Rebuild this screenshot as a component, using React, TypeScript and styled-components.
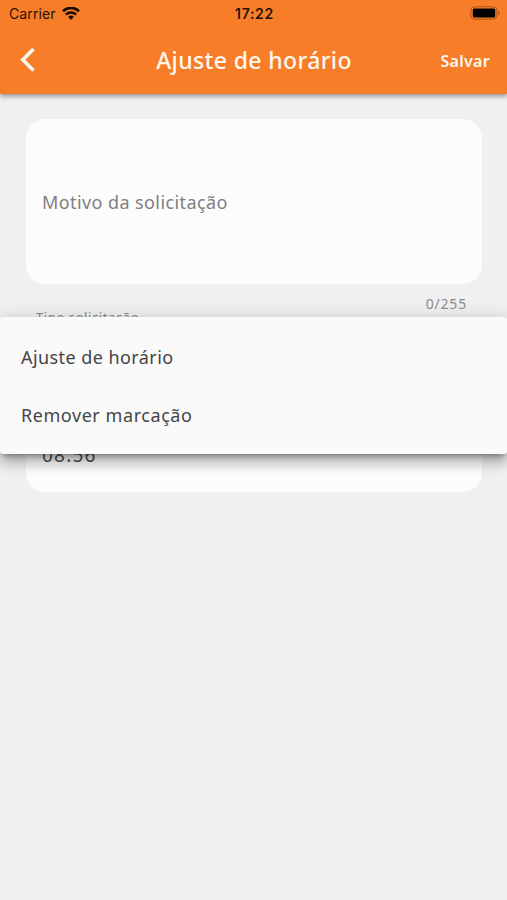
import React from 'react';
import styled, { createGlobalStyle } from 'styled-components';

const GlobalStyle = createGlobalStyle`
  * { box-sizing: border-box; }
  body { margin: 0; background: #f0f0f0; }
`;

const Screen = styled.div`
  position: relative;
  height: 900px;
  overflow: hidden;
  background: #f0f0f0;
  font-family: 'Noto Sans', sans-serif;
`;

const Header = styled.header`
  position: relative;
  height: 94px;
  background: #f87d28;
  box-shadow: 0 2px 5px rgba(0, 0, 0, 0.42);
`;

const StatusBar = styled.div`
  height: 28px;
  padding: 0 7px 0 9px;
  display: grid;
  grid-template-columns: 1fr auto 1fr;
  align-items: center;
  color: #1f1208;
  font: 400 14px/28px Inter, sans-serif;
`;

const Carrier = styled.div`
  display: flex;
  align-items: center;
  gap: 6px;
  letter-spacing: 0.12px;
`;

const Clock = styled.div`
  font-weight: 600;
  font-size: 14px;
  letter-spacing: 0.7px;
`;

const Battery = styled.svg`
  justify-self: end;
  margin-bottom: 2px;
`;

const AppBar = styled.div`
  height: 64px;
  padding: 0 17px 0 20px;
  display: grid;
  grid-template-columns: 1fr auto 1fr;
  align-items: center;
  color: #fff8ee;
`;

const Title = styled.h1`
  margin: 0 2px 0 0;
  font-size: 23px;
  font-weight: 500;
  line-height: 64px;
  letter-spacing: 0.38px;
`;

const Save = styled.button`
  justify-self: end;
  padding: 2px 0 0;
  border: 0;
  background: none;
  color: inherit;
  font: 600 16px/62px 'Noto Sans', sans-serif;
  letter-spacing: 0.3px;
`;

const Form = styled.main`
  padding: 25px 25px 0 26px;
`;

const Field = styled.div<{ $height: number }>`
  height: ${(p) => p.$height}px;
  padding: 0 16px;
  display: flex;
  align-items: center;
  border-radius: 19px;
  background: #fcfcfc;
`;

const Placeholder = styled.span`
  color: #808080;
  font-size: 18px;
  letter-spacing: 0.41px;
`;

const Counter = styled.div`
  padding: 10px 15px 0 0;
  height: 23px;
  text-align: right;
  color: #8c8c8c;
  font-size: 14px;
  line-height: 20px;
  letter-spacing: 0.8px;
`;

const Label = styled.div`
  height: 103px;
  padding: 0 10px;
  color: #858585;
  font-size: 13px;
  line-height: 20px;
  letter-spacing: 0.6px;
`;

const Value = styled.span`
  padding-top: 8px;
  color: #505050;
  font-size: 19px;
  letter-spacing: 1.2px;
`;

const Menu = styled.ul`
  position: absolute;
  top: 317px;
  left: 0;
  right: 0;
  margin: 0;
  height: 137px;
  padding: 11px 0 9px;
  list-style: none;
  border-radius: 3px;
  background: #fafafa;
  box-shadow:
    0 5px 5px -3px rgba(0, 0, 0, 0.3),
    0 9px 14px 0 rgba(0, 0, 0, 0.22),
    0 3px 18px 2px rgba(0, 0, 0, 0.14);
`;

const Option = styled.li<{ $spacing: number }>`
  height: 58px;
  padding-left: 21px;
  color: #454545;
  font-size: 18px;
  line-height: 58px;
  letter-spacing: ${(p) => p.$spacing}px;
`;

export default function App() {
  return (
    <Screen>
      <GlobalStyle />
      <Header>
        <StatusBar>
          <Carrier>
            <span>Carrier</span>
            <svg width="18" height="14" viewBox="0 0 18 14" fill="none" stroke="#170b02" strokeWidth="2.7">
              <path d="M1 4.2a11.4 11.4 0 0 1 16 0" />
              <path d="M3.9 7.6a7.3 7.3 0 0 1 10.2 0" />
              <path d="M9 12.8 6.1 9.9a4.2 4.2 0 0 1 5.8 0Z" fill="#170b02" stroke="none" />
            </svg>
          </Carrier>
          <Clock>17:22</Clock>
          <Battery width="30" height="14" viewBox="0 0 30 14">
            <rect x="0.8" y="0.8" width="26" height="12.4" rx="3.8" fill="none" stroke="#a8541b" strokeWidth="1" />
            <rect x="2.8" y="2.4" width="22.4" height="9.2" rx="1.5" fill="#000" />
            <path d="M28.2 4.8c1.8.7 1.8 3.7 0 4.4Z" fill="#9e5220" />
          </Battery>
        </StatusBar>
        <AppBar>
          <svg width="16" height="26" viewBox="0 0 16 26" fill="none" stroke="#fff8f0" strokeWidth="3.6">
            <path d="M13.5 2 2.8 12.7 13.5 23.4" />
          </svg>
          <Title>Ajuste de horário</Title>
          <Save>Salvar</Save>
        </AppBar>
      </Header>
      <Form>
        <Field $height={165}>
          <Placeholder>Motivo da solicitação</Placeholder>
        </Field>
        <Counter>0/255</Counter>
        <Label>Tipo solicitação</Label>
        <Field $height={82}>
          <Value>08:56</Value>
        </Field>
      </Form>
      <Menu>
        <Option $spacing={0.43}>Ajuste de horário</Option>
        <Option $spacing={0.56}>Remover marcação</Option>
      </Menu>
    </Screen>
  );
}
